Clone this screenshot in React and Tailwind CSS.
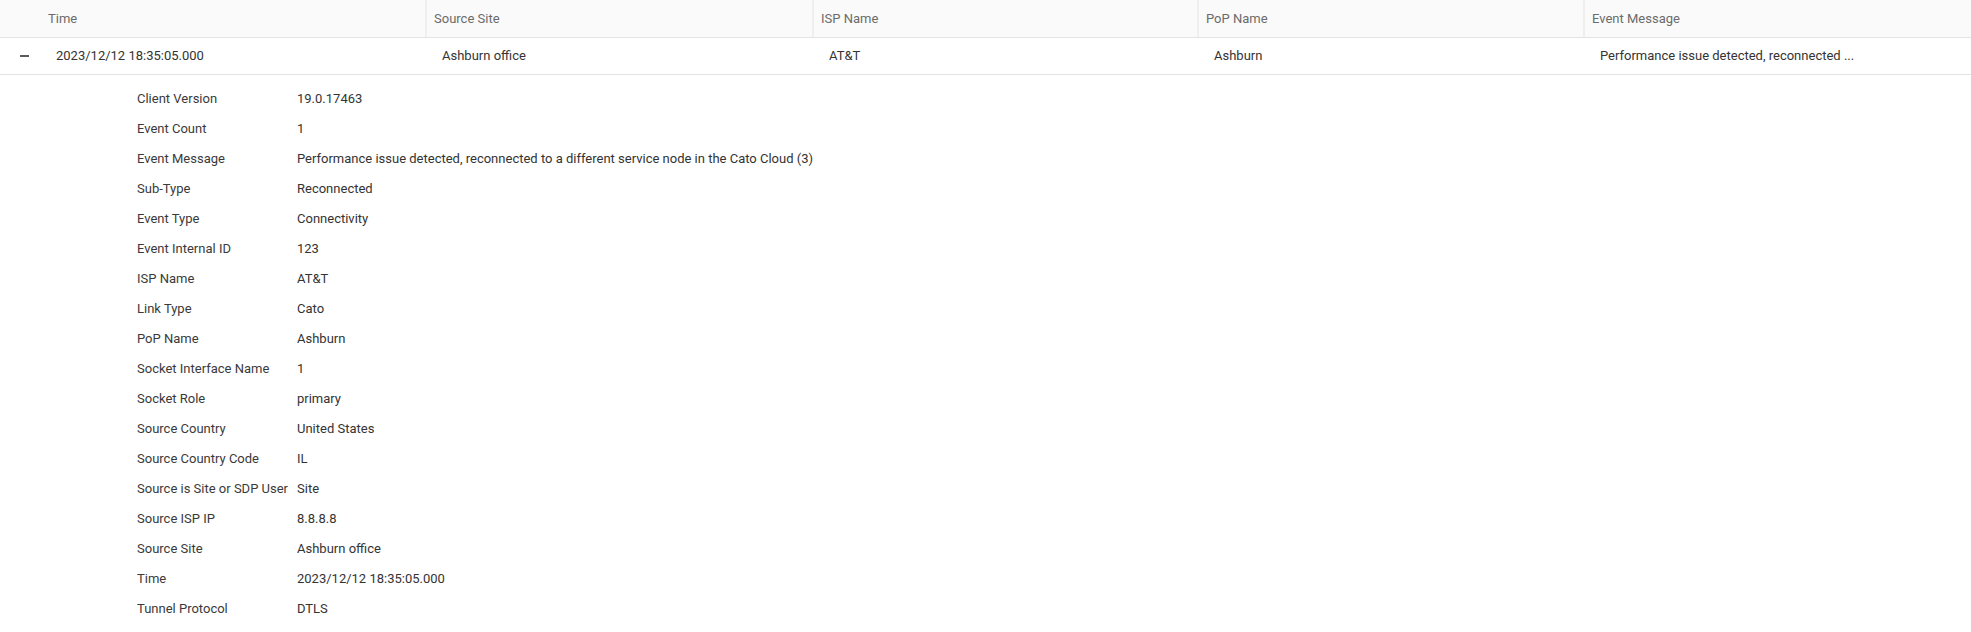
import React from "react";

const columns = [
  { key: "time", label: "Time", width: "w-[386px]", value: "2023/12/12 18:35:05.000" },
  { key: "site", label: "Source Site", width: "w-[387px]", value: "Ashburn office" },
  { key: "isp", label: "ISP Name", width: "w-[385px]", value: "AT&T" },
  { key: "pop", label: "PoP Name", width: "w-[386px]", value: "Ashburn" },
  { key: "msg", label: "Event Message", width: "w-[388px]", value: "Performance issue detected, reconnected ..." },
];

const details = [
  ["Client Version", "19.0.17463"],
  ["Event Count", "1"],
  ["Event Message", "Performance issue detected, reconnected to a different service node in the Cato Cloud (3)"],
  ["Sub-Type", "Reconnected"],
  ["Event Type", "Connectivity"],
  ["Event Internal ID", "123"],
  ["ISP Name", "AT&T"],
  ["Link Type", "Cato"],
  ["PoP Name", "Ashburn"],
  ["Socket Interface Name", "1"],
  ["Socket Role", "primary"],
  ["Source Country", "United States"],
  ["Source Country Code", "IL"],
  ["Source is Site or SDP User", "Site"],
  ["Source ISP IP", "8.8.8.8"],
  ["Source Site", "Ashburn office"],
  ["Time", "2023/12/12 18:35:05.000"],
  ["Tunnel Protocol", "DTLS"],
];

export default function App() {
  return (
    <div className="w-[1971px] h-[632px] overflow-hidden bg-white font-['Roboto',sans-serif] text-[13px]">
      {/* header */}
      <div className="flex h-[38px] bg-[#fafafa] border-b border-[#e3e3e3]">
        <div className="w-[39px] shrink-0" />
        {columns.map((c, i) => (
          <div
            key={c.key}
            className={`${c.width} shrink-0 flex items-center text-[#6b6b6b] ${
              i === 0 ? "pl-[9px]" : "pl-[7px] border-l-2 border-[#efefef]"
            }`}
          >
            {c.label}
          </div>
        ))}
      </div>

      {/* expanded row */}
      <div className="flex h-[37px] border-b border-[#e3e3e3] text-[#333333]">
        <div className="w-[39px] shrink-0 flex items-center pl-[20px]">
          <span className="block w-[9px] h-[2px] bg-[#5a5a5a]" />
        </div>
        {columns.map((c) => (
          <div key={c.key} className={`${c.width} shrink-0 flex items-center whitespace-nowrap pl-[17px]`}>
            {c.value}
          </div>
        ))}
      </div>

      {/* details */}
      <div className="pt-[9px] pl-[137px]">
        {details.map(([label, value]) => (
          <div key={label} className="flex items-center h-[30px]">
            <div className="w-[160px] shrink-0 text-[#3a3a3a] whitespace-nowrap">{label}</div>
            <div className="text-[#333333] whitespace-nowrap">{value}</div>
          </div>
        ))}
      </div>
    </div>
  );
}
